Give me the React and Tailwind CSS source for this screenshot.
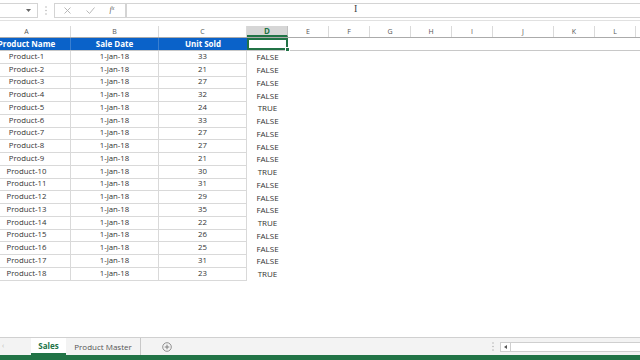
import React from "react";

const units = [33,21,27,32,24,33,27,27,21,30,31,29,35,22,26,25,31,23];
const flags = [0,0,0,0,1,0,0,0,0,1,0,0,0,1,0,0,0,1];
const extraCols = [
  { l: "E", w: "w-[41px]" }, { l: "F", w: "w-[41px]" }, { l: "G", w: "w-[41px]" }, { l: "H", w: "w-[41px]" },
  { l: "I", w: "w-[41px]" }, { l: "J", w: "w-[61px]" }, { l: "K", w: "w-[41px]" }, { l: "L", w: "w-[41px]" }, { l: "", w: "w-[41px]" },
];

export default function App() {
  return (
    <div className="w-[640px] h-[360px] overflow-hidden bg-white flex flex-col relative text-[#333]" style={{ fontFamily: "'Open Sans', 'Liberation Sans', sans-serif" }}>
      {/* Formula bar */}
      <div className="h-[20px] flex items-center gap-0 shrink-0 bg-white">
        <div className="w-[38px] h-[15px] border border-[#d4d4d4] border-l-0 flex items-center justify-end pr-[6px]">
          <svg width="5" height="3" viewBox="0 0 5 3"><path d="M0 0h5L2.5 3z" fill="#666" /></svg>
        </div>
        <div className="w-[16px] flex justify-center">
          <svg width="2" height="9" viewBox="0 0 2 9"><circle cx="1" cy="1" r="0.7" fill="#aaa"/><circle cx="1" cy="4.5" r="0.7" fill="#aaa"/><circle cx="1" cy="8" r="0.7" fill="#aaa"/></svg>
        </div>
        <div className="w-[72px] h-[15px] border border-[#d4d4d4] flex items-center">
          <div className="w-[24px] flex justify-center">
            <svg width="7" height="7" viewBox="0 0 7 7"><path d="M0.5 0.5l6 6M6.5 0.5l-6 6" stroke="#b0b0b0" strokeWidth="0.9"/></svg>
          </div>
          <div className="w-[22px] flex justify-center">
            <svg width="9" height="7" viewBox="0 0 9 7"><path d="M0.5 3.5l3 3 5-6" stroke="#b0b0b0" strokeWidth="0.9" fill="none"/></svg>
          </div>
          <div className="w-[22px] flex justify-center text-[8px] italic text-[#666]" style={{ fontFamily: "'Liberation Serif', serif" }}>f<span className="text-[6px]">x</span></div>
        </div>
        <div className="flex-1 h-[15px] border border-[#d4d4d4] border-r-0 relative">
          <span className="absolute left-[227px] top-[-3px] text-[10px] text-[#444]" style={{ fontFamily: "'Liberation Serif', serif" }}>I</span>
        </div>
      </div>
      <div className="h-[6px] shrink-0 border-t border-[#e1e1e1]" />

      {/* Sheet */}
      <div className="flex-1 overflow-hidden">
        <div className="ml-[-17px] w-[700px]">
          {/* Column headers */}
          <div className="flex h-[12px] border-b border-[#ababab] text-[7px] text-[#555]">
            {["A","B","C"].map((c) => (
              <div key={c} className="w-[88px] border-r border-[#dadada] flex items-center justify-center pt-[1px]">{c}</div>
            ))}
            <div className="w-[41px] bg-[#d6d6d6] border-r border-[#c0c0c0] border-b-2 border-b-[#217346] flex items-center justify-center text-[#217346] font-bold text-[8px] pt-[1px]">D</div>
            {extraCols.map((c, i) => (
              <div key={i} className={`${c.w} border-r border-[#dadada] flex items-center justify-center pt-[1px]`}>{c.l}</div>
            ))}
          </div>
          {/* Header row */}
          <div className="flex h-[13px] border-b border-[#c8c8c8] text-[8px]">
            <div className="w-[88px] bg-[#0a62c9] text-white font-bold flex items-center justify-center border-r border-[#3a7fd0]">Product Name</div>
            <div className="w-[88px] bg-[#0a62c9] text-white font-bold flex items-center justify-center border-r border-[#3a7fd0]">Sale Date</div>
            <div className="w-[88px] bg-[#0a62c9] text-white font-bold flex items-center justify-center">Unit Sold</div>
            <div className="w-[41px] border-2 border-[#217346] relative">
              <div className="absolute right-[-4px] bottom-[-4px] w-[5px] h-[5px] bg-[#217346] border border-white" />
            </div>
          </div>
          {/* Data rows */}
          {units.map((u, i) => (
            <div key={i} className="flex h-[12.76px] text-[7.8px] leading-none">
              <div className="w-[88px] border-r border-b border-[#d9d9d9] flex items-center justify-center">Product-{i + 1}</div>
              <div className="w-[88px] border-r border-b border-[#d9d9d9] flex items-center justify-center">1-Jan-18</div>
              <div className="w-[88px] border-r border-b border-[#d9d9d9] flex items-center justify-center">{u}</div>
              <div className="w-[41px] flex items-center justify-center text-[8px]">{flags[i] ? "TRUE" : "FALSE"}</div>
            </div>
          ))}
        </div>
      </div>

      {/* Tab bar */}
      <div className="h-[18px] shrink-0 bg-[#f3f3f3] border-t border-[#d0d0d0] flex items-center text-[8px]">
        <div className="w-[31px] pl-[2px] text-[#bbb] text-[7px]">‹</div>
        <div className="w-[35px] h-full bg-white flex items-center justify-center font-bold text-[#217346] border-b-2 border-[#217346]">Sales</div>
        <div className="w-[75px] h-full flex items-center justify-center text-[#555] border-r border-[#c8c8c8]">Product Master</div>
        <div className="w-[52px] flex justify-center">
          <svg width="10" height="10" viewBox="0 0 10 10"><circle cx="5" cy="5" r="4.3" fill="none" stroke="#777" strokeWidth="0.8"/><path d="M5 2.7v4.6M2.7 5h4.6" stroke="#777" strokeWidth="0.9"/></svg>
        </div>
        <div className="flex-1" />
        <div className="w-[14px] flex justify-center">
          <svg width="2" height="9" viewBox="0 0 2 9"><circle cx="1" cy="1" r="0.7" fill="#aaa"/><circle cx="1" cy="4.5" r="0.7" fill="#aaa"/><circle cx="1" cy="8" r="0.7" fill="#aaa"/></svg>
        </div>
        <div className="w-[140px] h-[10px] bg-white border border-[#cfcfcf] border-r-0 flex items-center">
          <div className="w-[10px] h-full border-r border-[#cfcfcf] flex items-center justify-center">
            <svg width="3" height="4" viewBox="0 0 3 4"><path d="M3 0v4L0 2z" fill="#555"/></svg>
          </div>
        </div>
      </div>
      {/* Status bar */}
      <div className="h-[5px] shrink-0 bg-[#217346]" />
    </div>
  );
}
